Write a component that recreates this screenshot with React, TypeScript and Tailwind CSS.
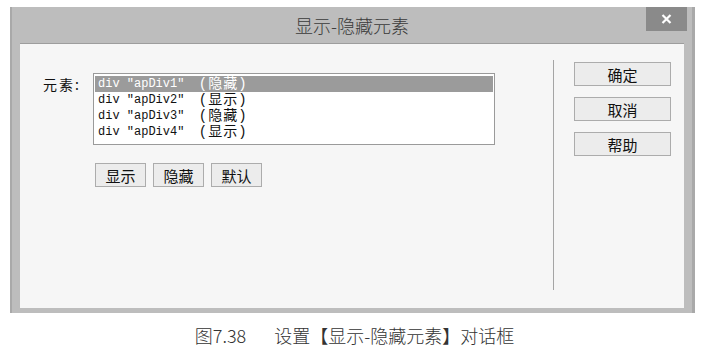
import React from "react";

const cjk = { fontFamily: '"Noto Sans CJK SC", "Noto Sans", sans-serif' };
const mono = { fontFamily: '"Liberation Mono", "Noto Sans CJK SC", monospace' };

const items = [
  { name: 'div "apDiv1"', state: "(隐藏)" },
  { name: 'div "apDiv2"', state: "(显示)" },
  { name: 'div "apDiv3"', state: "(隐藏)" },
  { name: 'div "apDiv4"', state: "(显示)" },
];

function Btn({ label, className }: { label: string; className: string }) {
  return (
    <button
      className={`flex items-center justify-center border border-[#acacac] bg-[#ececec] text-[15px] leading-none text-[#111] ${className}`}
      style={cjk}
    >
      {label}
    </button>
  );
}

export default function App() {
  return (
    <div className="h-[353px] w-[709px] overflow-hidden bg-white">
      <div className="pl-[10px] pt-[7px]">
        <div className="flex h-[306px] w-[685px] flex-col border-l-2 border-r-[3px] border-[#a9a9a9] bg-[#bdbdbd]">
          <div className="relative flex h-[36px] shrink-0 items-center justify-center">
            <span className="text-[18px] font-light text-[#3a3a3a]" style={cjk}>
              显示-隐藏元素
            </span>
            <div className="absolute right-[5px] top-0 flex h-[24px] w-[41px] items-center justify-center bg-[#8a8a8a]">
              <svg width="11" height="10" viewBox="0 0 11 10">
                <path d="M1.5 1 L9.5 9 M9.5 1 L1.5 9" stroke="#fff" strokeWidth="2.2" />
              </svg>
            </div>
          </div>
          <div className="mx-[8px] mb-[5px] flex flex-1 border-t border-[#9d9d9d] bg-[#f6f6f6]">
            <div className="flex w-[533px] shrink-0 flex-col pl-[23px] pt-[29px]">
              <div className="flex">
                <span className="w-[50px] pt-[4px] text-[14px] leading-none tracking-[2px] text-[#111]" style={cjk}>
                  元素:
                </span>
                <div className="flex h-[72px] w-[402px] flex-col border border-[#9a9a9a] bg-white px-[1px] pt-[2px]">
                  {items.map((it, i) => (
                    <div
                      key={it.name}
                      className={`flex h-[16px] items-center whitespace-pre pl-[3px] leading-[16px] ${
                        i === 0 ? "bg-[#9b9b9b] text-white" : "text-[#111]"
                      }`}
                      style={mono}
                    >
                      <span className="text-[12px]">{it.name + "  "}</span>
                      <span className="text-[14px] tracking-[1px]">{it.state}</span>
                    </div>
                  ))}
                </div>
              </div>
              <div className="ml-[52px] mt-[18px] flex gap-[7px]">
                <Btn label="显示" className="h-[24px] w-[51px]" />
                <Btn label="隐藏" className="h-[24px] w-[51px]" />
                <Btn label="默认" className="h-[24px] w-[51px]" />
              </div>
            </div>
            <div className="mt-[16px] h-[230px] w-px bg-[#a5a5a5]" />
            <div className="ml-[20px] flex flex-col gap-[11px] pt-[18px]">
              <Btn label="确定" className="h-[24px] w-[97px]" />
              <Btn label="取消" className="h-[24px] w-[97px]" />
              <Btn label="帮助" className="h-[24px] w-[97px]" />
            </div>
          </div>
        </div>
      </div>
      <div className="mt-[13px] text-center text-[18px] font-light leading-none text-[#333]" style={cjk}>
        图7.38<span className="inline-block w-[28px]" />设置【显示-隐藏元素】对话框
      </div>
    </div>
  );
}
